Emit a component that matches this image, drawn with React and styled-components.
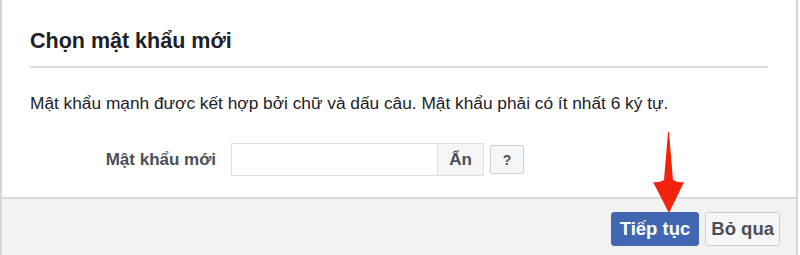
import React from "react";
import styled, { createGlobalStyle } from "styled-components";

const Global = createGlobalStyle`
  html, body { margin: 0; padding: 0; background: #fff; }
  body { font-family: "Liberation Sans", Arial, Helvetica, sans-serif; }
  * { box-sizing: border-box; }
`;

const Dialog = styled.div`
  position: relative;
  width: 798px;
  height: 255px;
  border-left: 2px solid #d6d6d6;
  border-right: 2px solid #d6d6d6;
  display: flex;
  flex-direction: column;
  background: #fff;
`;

const Header = styled.div`
  margin: 0 28px;
  padding-top: 28px;
  height: 68px;
  border-bottom: 2px solid #d9d9d9;
`;

const Title = styled.h2`
  margin: 0;
  font-size: 21.5px;
  font-weight: bold;
  color: #1d2129;
  line-height: 26px;
`;

const Body = styled.div`
  flex: 1;
  padding: 24px 28px 0;
`;

const Desc = styled.p`
  margin: 0;
  font-size: 17.3px;
  line-height: 22px;
  color: #1d2129;
`;

const FormRow = styled.div`
  display: flex;
  align-items: center;
  margin-top: 29px;
  padding-left: 66px;
`;

const Label = styled.label`
  width: 120px;
  text-align: right;
  font-size: 17px;
  font-weight: bold;
  color: #4b4f56;
  margin-right: 15px;
  white-space: nowrap;
`;

const InputGroup = styled.div`
  display: flex;
  height: 33px;
`;

const Input = styled.input`
  width: 206px;
  height: 33px;
  border: 1px solid #dddfe2;
  border-right: none;
  outline: none;
  padding: 0 6px;
  font-size: 15px;
`;

const Addon = styled.button`
  height: 33px;
  width: 47px;
  border: 1px solid #dddfe2;
  background: #f5f6f7;
  font-family: inherit;
  font-size: 17px;
  font-weight: bold;
  color: #4b4f56;
  padding: 0;
`;

const HelpButton = styled.button`
  margin-left: 6px;
  width: 34px;
  height: 29px;
  border: 1px solid #ccd0d5;
  border-radius: 2px;
  background: #f5f6f7;
  font-family: inherit;
  font-size: 14px;
  font-weight: bold;
  color: #4b4f56;
  padding: 0;
`;

const Footer = styled.div`
  height: 58px;
  border-top: 2px solid #dadada;
  background: #f2f2f2;
  display: flex;
  justify-content: flex-end;
  align-items: flex-start;
  padding: 13px 16px 0 0;
  gap: 6px;
`;

const Btn = styled.button`
  height: 34px;
  padding: 0 ${(p) => (p.$primary ? "8px" : "5px")};
  border-radius: 3px;
  border: 1px solid ${(p) => (p.$primary ? "#4267b2" : "#ccd0d5")};
  background: ${(p) => (p.$primary ? "#4267b2" : "#f5f6f7")};
  color: ${(p) => (p.$primary ? "#fff" : "#4b4f56")};
  font-family: inherit;
  font-size: 18.5px;
  font-weight: bold;
`;

const Arrow = styled.svg`
  position: absolute;
  left: 649px;
  top: 130px;
`;

export default function App() {
  return (
    <>
      <Global />
      <Dialog>
        <Header>
          <Title>Chọn mật khẩu mới</Title>
        </Header>
        <Body>
          <Desc>
            Mật khẩu mạnh được kết hợp bởi chữ và dấu câu. Mật khẩu phải có ít nhất 6 ký tự.
          </Desc>
          <FormRow>
            <Label>Mật khẩu mới</Label>
            <InputGroup>
              <Input type="password" />
              <Addon>Ẩn</Addon>
            </InputGroup>
            <HelpButton>?</HelpButton>
          </FormRow>
        </Body>
        <Footer>
          <Btn $primary>Tiếp tục</Btn>
          <Btn>Bỏ qua</Btn>
        </Footer>
        <Arrow width="36" height="86" viewBox="0 0 36 86">
          <path
            d="M17 2 L18 2 L22 50 Q27 53 33 52 L18 83 L2 52 Q8 53 13 50 Z"
            fill="#f2220d"
          />
        </Arrow>
      </Dialog>
    </>
  );
}
